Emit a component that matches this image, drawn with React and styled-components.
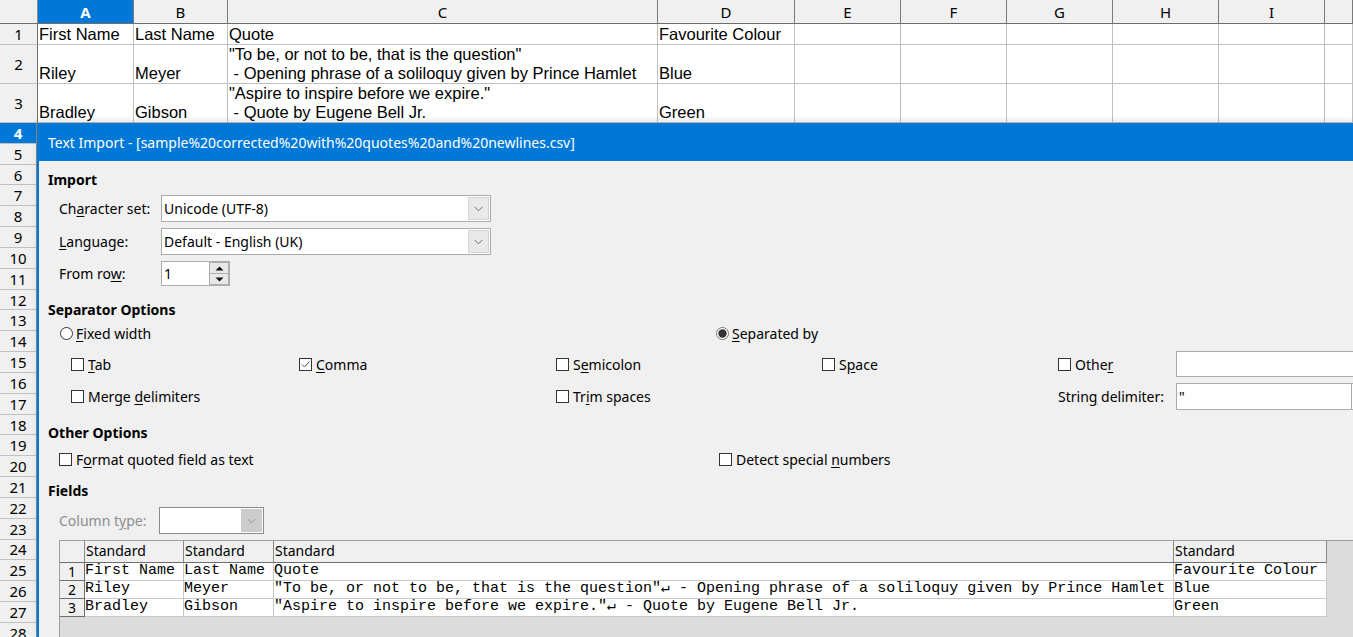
import React from 'react';
import styled, { createGlobalStyle } from 'styled-components';

const GlobalStyle = createGlobalStyle`
  html, body {
    margin: 0;
    padding: 0;
    width: 1353px;
    height: 637px;
    overflow: hidden;
    background: #ffffff;
  }
  body {
    font-family: "Noto Sans", "Open Sans", sans-serif;
    color: #000;
  }
  * { box-sizing: border-box; }
`;

const columns = [
    { id: 'A', selected: true },
    { id: 'B' }, { id: 'C' }, { id: 'D' }, { id: 'E' },
    { id: 'F' }, { id: 'G' }, { id: 'H' }, { id: 'I' }, { id: '' },
];

const sheetRows = [
    { n: 1, cells: ['First Name', 'Last Name', 'Quote', 'Favourite Colour'] },
    { n: 2, cells: ['Riley', 'Meyer', '"To be, or not to be, that is the question"\n - Opening phrase of a soliloquy given by Prince Hamlet', 'Blue'] },
    { n: 3, cells: ['Bradley', 'Gibson', '"Aspire to inspire before we expire."\n - Quote by Eugene Bell Jr.', 'Green'] },
];

const lowerRows = Array.from({ length: 25 }, (_, i) => i + 4);

const previewRows = [
    ['First Name', 'Last Name', 'Quote', 'Favourite Colour'],
    ['Riley', 'Meyer', '"To be, or not to be, that is the question"↵ - Opening phrase of a soliloquy given by Prince Hamlet', 'Blue'],
    ['Bradley', 'Gibson', '"Aspire to inspire before we expire."↵ - Quote by Eugene Bell Jr.', 'Green'],
];

function Chevron({ color = '#6a6a6a' }) {
    return (
        <svg width="9" height="6" viewBox="0 0 9 6">
            <path d="M0.5 0.8 L4.5 4.8 L8.5 0.8" fill="none" stroke={color} strokeWidth="1" />
        </svg>
    );
}

function Check({ checked }) {
    return (
        <CheckBox>
            {checked && (
                <svg width="11" height="11" viewBox="0 0 11 11">
                    <path d="M2 5.5 L4.5 8 L9.5 2.5" fill="none" stroke="#555" strokeWidth="1" />
                </svg>
            )}
        </CheckBox>
    );
}

function Radio({ checked }) {
    return (
        <svg width="13" height="13" viewBox="0 0 13 13" style={{ flex: 'none' }}>
            <circle cx="6.5" cy="6.5" r="6" fill="#fff" stroke={checked ? '#777' : '#333'} strokeWidth="1" />
            {checked && <circle cx="6.5" cy="6.5" r="4.2" fill="#333" />}
        </svg>
    );
}

function App() {
    return (
        <Page>
            <GlobalStyle />
            <SheetGrid>
                <Corner />
                {columns.map((c, i) => (
                    <ColHead key={i} $selected={c.selected}>{c.id}</ColHead>
                ))}
                {sheetRows.map(r => (
                    <React.Fragment key={r.n}>
                        <RowHead>{r.n}</RowHead>
                        {r.cells.map((c, i) => <Cell key={i}>{c}</Cell>)}
                        {Array.from({ length: 6 }, (_, i) => <Cell key={'e' + i} />)}
                    </React.Fragment>
                ))}
            </SheetGrid>

            <Lower>
                <RowHeadColumn>
                    {lowerRows.map(n => (
                        <LowerRowHead key={n} $selected={n === 4}>{n}</LowerRowHead>
                    ))}
                </RowHeadColumn>

                <Dialog>
                    <TitleBar>Text Import - [sample%20corrected%20with%20quotes%20and%20newlines.csv]</TitleBar>
                    <Body>
                        <Heading $gap={9}>Import</Heading>
                        <FieldRow $gap={5}>
                            <FieldLabel>Ch<U>a</U>racter set:</FieldLabel>
                            <Combo $w={330}>
                                <ComboText>Unicode (UTF-8)</ComboText>
                                <DropButton><Chevron /></DropButton>
                            </Combo>
                        </FieldRow>
                        <FieldRow $gap={6}>
                            <FieldLabel><U>L</U>anguage:</FieldLabel>
                            <Combo $w={330}>
                                <ComboText>Default - English (UK)</ComboText>
                                <DropButton><Chevron /></DropButton>
                            </Combo>
                        </FieldRow>
                        <FieldRow $gap={6} $h={25}>
                            <FieldLabel>From ro<U>w</U>:</FieldLabel>
                            <Spin>
                                <ComboText>1</ComboText>
                                <SpinButtons>
                                    <SpinButton>
                                        <svg width="9" height="5" viewBox="0 0 9 5"><path d="M0.5 4.5 L4.5 0.5 L8.5 4.5 Z" fill="#111" /></svg>
                                    </SpinButton>
                                    <SpinButton>
                                        <svg width="9" height="5" viewBox="0 0 9 5"><path d="M0.5 0.5 L4.5 4.5 L8.5 0.5 Z" fill="#111" /></svg>
                                    </SpinButton>
                                </SpinButtons>
                            </Spin>
                        </FieldRow>

                        <Heading $gap={14}>Separator Options</Heading>
                        <RadioRow>
                            <Option $gap={3}><Radio /><span><U>F</U>ixed width</span></Option>
                            <Option $gap={3}><Radio checked /><span><U>S</U>eparated by</span></Option>
                        </RadioRow>
                        <SepRow $gap={8} $h={26}>
                            <Option><Check /><span><U>T</U>ab</span></Option>
                            <Option><Check checked /><span><U>C</U>omma</span></Option>
                            <Option><Check /><span>S<U>e</U>micolon</span></Option>
                            <Option><Check /><span>S<U>p</U>ace</span></Option>
                            <Option><Check /><span>Othe<U>r</U></span></Option>
                            <TextBox $w={200} />
                        </SepRow>
                        <SepRow $gap={6} $h={27}>
                            <Option><Check /><span>Merge <U>d</U>elimiters</span></Option>
                            <span />
                            <Option><Check /><span>Tr<U>i</U>m spaces</span></Option>
                            <span />
                            <Option><span>Strin<U>g</U> delimiter:</span></Option>
                            <Combo $w={210}>
                                <ComboText $w={175}>"</ComboText>
                                <DropButton />
                            </Combo>
                        </SepRow>

                        <Heading $gap={13}>Other Options</Heading>
                        <OtherRow>
                            <Option><Check /><span>F<U>o</U>rmat quoted field as text</span></Option>
                            <Option><Check /><span>Detect special <U>n</U>umbers</span></Option>
                        </OtherRow>

                        <Heading $gap={12}>Fields</Heading>
                        <FieldRow $gap={6}>
                            <FieldLabel $w={100} $disabled>Column t<U>y</U>pe:</FieldLabel>
                            <Combo $w={105} $disabled>
                                <ComboText />
                                <DropButton $disabled><Chevron color="#9a9a9a" /></DropButton>
                            </Combo>
                        </FieldRow>

                        <Preview>
                            <PreviewCorner />
                            {previewRows[0].map((_, i) => <PreviewHead key={i}>Standard</PreviewHead>)}
                            <PreviewFiller />
                            {previewRows.map((row, r) => (
                                <React.Fragment key={r}>
                                    <PreviewNum>{r + 1}</PreviewNum>
                                    {row.map((c, i) => <PreviewCell key={i}>{c}</PreviewCell>)}
                                    <PreviewFiller />
                                </React.Fragment>
                            ))}
                        </Preview>
                    </Body>
                </Dialog>
            </Lower>
        </Page>
    );
}

const Page = styled.div`
    width: 1353px;
    height: 637px;
    display: flex;
    flex-direction: column;
    overflow: hidden;
`;

/* spreadsheet behind the dialog */
const SheetGrid = styled.div`
    display: grid;
    grid-template-columns: 38px 96px 94px 430px 137px 106px 106px 106px 106px 106px 1fr;
    grid-template-rows: 24px 21px 39px 39px;
    flex: none;
`;

const Corner = styled.div`
    background: #f0f0f0;
    border-right: 1px solid #8a8a8a;
    border-bottom: 1px solid #6e6e6e;
`;

const ColHead = styled.div`
    background: ${p => p.$selected ? '#0078d7' : '#f0f0f0'};
    color: ${p => p.$selected ? '#fff' : '#000'};
    font-weight: ${p => p.$selected ? 700 : 400};
    font-size: 15px;
    display: flex;
    align-items: center;
    justify-content: center;
    border-right: 1px solid #7a7a7a;
    border-bottom: 1px solid #6e6e6e;
`;

const RowHead = styled.div`
    background: #f0f0f0;
    font-size: 15px;
    display: flex;
    align-items: center;
    justify-content: center;
    border-right: 1px solid #6e6e6e;
    border-bottom: 1px solid #c0c0c0;
`;

const Cell = styled.div`
    font-family: "Liberation Sans", Arial, sans-serif;
    font-size: 16.5px;
    line-height: 19px;
    white-space: pre;
    overflow: hidden;
    display: flex;
    flex-direction: column;
    justify-content: flex-end;
    padding-left: 1px;
    border-right: 1px solid #c0c0c0;
    border-bottom: 1px solid #c0c0c0;
`;

const Lower = styled.div`
    flex: 1;
    display: flex;
    min-height: 0;
`;

const RowHeadColumn = styled.div`
    width: 37px;
    flex: none;
    display: flex;
    flex-direction: column;
    overflow: hidden;
    background: #f0f0f0;
    border-right: 1px solid #8a8a8a;
`;

const LowerRowHead = styled.div`
    height: 20.83px;
    flex: none;
    display: flex;
    align-items: center;
    justify-content: center;
    font-size: 15px;
    background: ${p => p.$selected ? '#0078d7' : '#f0f0f0'};
    color: ${p => p.$selected ? '#fff' : '#000'};
    font-weight: ${p => p.$selected ? 700 : 400};
    border-bottom: 1px solid #c0c0c0;
`;

/* dialog */
const Dialog = styled.div`
    position: relative;
    flex: 1;
    display: flex;
    flex-direction: column;
    min-width: 0;
    background: #f0f0f0;
    border-left: 2px solid #0078d7;
    box-shadow: 0 -3px 6px rgba(0, 0, 0, 0.10);
`;

const TitleBar = styled.div`
    height: 38px;
    flex: none;
    background: #0078d7;
    color: #fff;
    font-size: 14px;
    display: flex;
    align-items: center;
    padding-left: 9px;
    white-space: nowrap;
`;

const Body = styled.div`
    flex: 1;
    min-height: 0;
    display: flex;
    flex-direction: column;
    padding-left: 9px;
    font-size: 14px;
`;

const Heading = styled.div`
    margin-top: ${p => p.$gap}px;
    height: 20px;
    line-height: 20px;
    font-weight: 700;
    flex: none;
`;

const U = styled.span`
    text-decoration: underline;
    text-underline-offset: 2px;
`;

const FieldRow = styled.div`
    margin-top: ${p => p.$gap}px;
    height: ${p => p.$h || 27}px;
    padding-left: 11px;
    display: flex;
    align-items: center;
    flex: none;
`;

const FieldLabel = styled.div`
    width: ${p => p.$w || 102}px;
    flex: none;
    color: ${p => p.$disabled ? '#8d8d8d' : '#000'};
    white-space: nowrap;
`;

const Combo = styled.div`
    width: ${p => p.$w}px;
    height: 100%;
    flex: none;
    display: flex;
    background: #fff;
    border: 1px solid ${p => p.$disabled ? '#8a8a8a' : '#acacac'};
`;

const ComboText = styled.div`
    flex: ${p => p.$w ? 'none' : 1};
    width: ${p => p.$w ? p.$w + 'px' : 'auto'};
    display: flex;
    align-items: center;
    padding-left: 2px;
    white-space: nowrap;
    ${p => p.$w ? 'border-right: 1px solid #acacac;' : ''}
`;

const DropButton = styled.div`
    width: 21px;
    flex: none;
    margin: 1px;
    display: flex;
    align-items: center;
    justify-content: center;
    background: ${p => p.$disabled ? '#cccccc' : '#e9e9e9'};
    border: 1px solid ${p => p.$disabled ? '#cccccc' : '#d4d4d4'};
`;

const Spin = styled.div`
    width: 69px;
    height: 100%;
    display: flex;
    background: #fff;
    border: 1px solid #acacac;
`;

const SpinButtons = styled.div`
    width: 20px;
    display: flex;
    flex-direction: column;
`;

const SpinButton = styled.div`
    flex: 1;
    display: flex;
    align-items: center;
    justify-content: center;
    background: #e8e8e8;
    border: 1px solid #adadad;
    & + & { border-top: none; }
`;

const Option = styled.div`
    display: flex;
    align-items: center;
    gap: ${p => p.$gap ?? 4}px;
    white-space: nowrap;
`;

const CheckBox = styled.div`
    width: 13px;
    height: 13px;
    flex: none;
    border: 1px solid #333;
    background: #fff;
    display: flex;
    align-items: center;
    justify-content: center;
`;

const RadioRow = styled.div`
    margin-top: 3px;
    height: 20px;
    flex: none;
    padding-left: 12px;
    display: grid;
    grid-template-columns: 656px auto;
    align-items: center;
`;

const SepRow = styled.div`
    margin-top: ${p => p.$gap}px;
    height: ${p => p.$h}px;
    flex: none;
    padding-left: 23px;
    display: grid;
    grid-template-columns: 228px 257px 266px 236px 118px auto;
    align-items: center;
    & > :last-child { height: 100%; }
`;

const TextBox = styled.div`
    width: ${p => p.$w}px;
    height: 100%;
    background: #fff;
    border: 1px solid #acacac;
`;

const OtherRow = styled.div`
    margin-top: 6px;
    height: 20px;
    flex: none;
    padding-left: 11px;
    display: grid;
    grid-template-columns: 660px auto;
    align-items: center;
`;

/* preview table */
const Preview = styled.div`
    margin-top: 6px;
    margin-left: 11px;
    flex: 1;
    min-height: 0;
    display: grid;
    grid-template-columns: 25px 99px 90px 900px 153px 1fr;
    grid-template-rows: 22px 18px 18px 18px 1fr;
    background: #dcdcdc;
    border-top: 1px solid #a0a0a0;
    border-left: 1px solid #a0a0a0;
    overflow: hidden;
`;

const PreviewCorner = styled.div`
    background: #f0f0f0;
    border-right: 1px solid #8a8a8a;
    border-bottom: 1px solid #6e6e6e;
`;

const PreviewHead = styled.div`
    background: #f0f0f0;
    font-size: 14px;
    line-height: 20px;
    padding-left: 1px;
    border-right: 1px solid #8a8a8a;
    border-bottom: 1px solid #6e6e6e;
    white-space: nowrap;
    overflow: hidden;
`;

const PreviewFiller = styled.div`
    background: #dcdcdc;
`;

const PreviewNum = styled.div`
    background: #f0f0f0;
    font-size: 14px;
    line-height: 17px;
    display: flex;
    align-items: flex-end;
    justify-content: center;
    border-right: 1px solid #6e6e6e;
    border-bottom: 1px solid #6e6e6e;
`;

const PreviewCell = styled.div`
    background: #fff;
    font-family: "Liberation Mono", "DejaVu Sans Mono", monospace;
    font-size: 15px;
    line-height: 15px;
    white-space: pre;
    overflow: hidden;
    border-right: 1px solid #c8c8c8;
    border-bottom: 1px solid #c8c8c8;
`;

export default App;
